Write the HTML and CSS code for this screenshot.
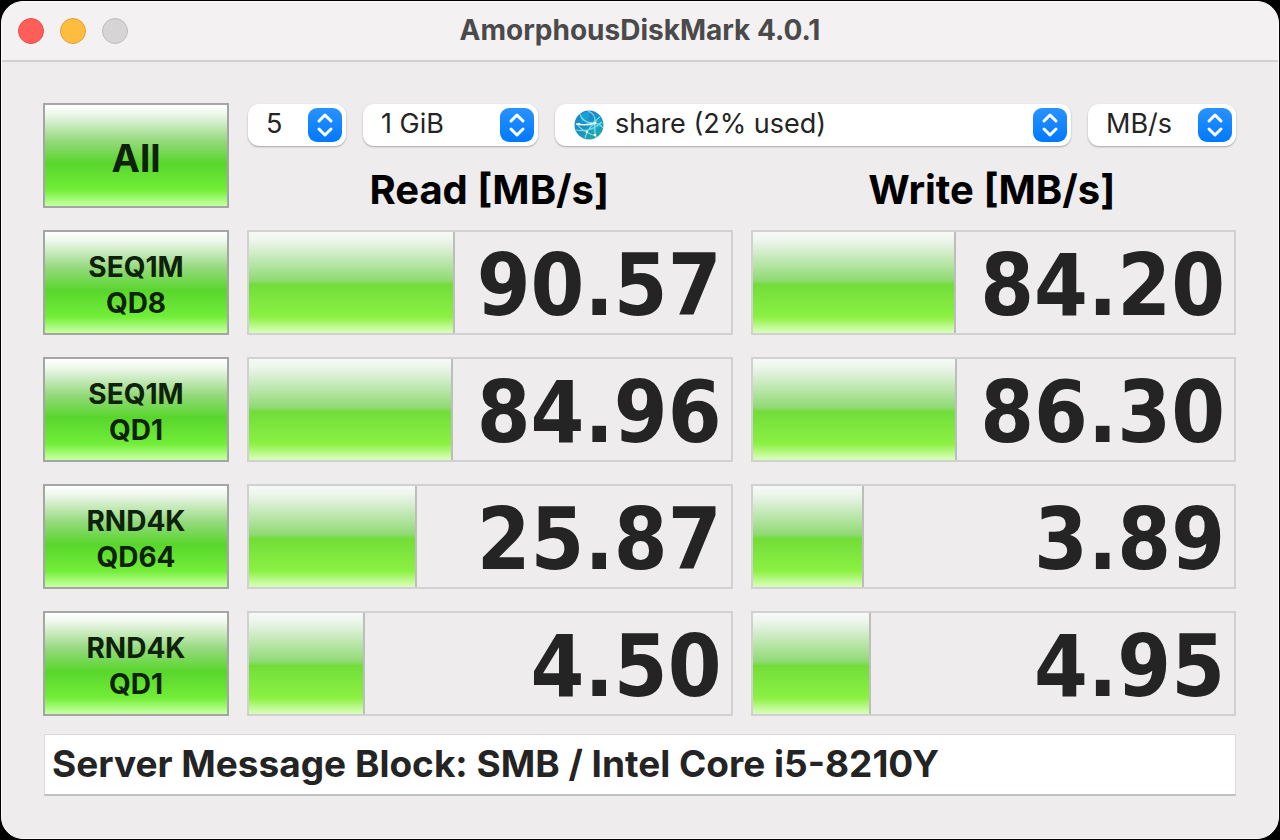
FILE: index.html
```html
<!DOCTYPE html>
<html lang="en">
<head>
<meta charset="utf-8">
<title>AmorphousDiskMark 4.0.1</title>
<link rel="stylesheet" href="styles.css">
</head>
<body>
<div class="window">
  <header class="titlebar">
    <div class="lights">
      <button class="light close" type="button" aria-label="Close"></button>
      <button class="light minimize" type="button" aria-label="Minimize"></button>
      <button class="light zoom" type="button" aria-label="Zoom" disabled></button>
    </div>
    <h1 class="title">AmorphousDiskMark 4.0.1</h1>
  </header>
  <main class="content">
    <div class="grid">
      <button class="run run-all" type="button">All</button>
      <div class="top">
        <div class="selects">
          <div class="popup count">
            <select aria-label="Test count"><option>5</option></select>
            <svg class="arrows" viewBox="0 0 34 34" aria-hidden="true"><path d="M11 13l6-6 6 6M11 21l6 6 6-6"/></svg>
          </div>
          <div class="popup size">
            <select aria-label="Test size"><option>1 GiB</option></select>
            <svg class="arrows" viewBox="0 0 34 34" aria-hidden="true"><path d="M11 13l6-6 6 6M11 21l6 6 6-6"/></svg>
          </div>
          <div class="popup volume">
            <svg class="globe" viewBox="0 0 30 30" aria-hidden="true">
              <defs>
                <linearGradient id="sea" x1="0" y1="0" x2="0.7" y2="1">
                  <stop offset="0" stop-color="#1c86d2"/>
                  <stop offset="0.5" stop-color="#1a8fc6"/>
                  <stop offset="1" stop-color="#22a8a2"/>
                </linearGradient>
              </defs>
              <circle cx="15" cy="15" r="14.5" fill="url(#sea)"/>
              <path d="M7 5q4-4 9-3l-2 7-7 3zM16 12l9-5 3 8-7 8-6-3z" fill="#12b4dc" opacity=".6"/>
              <path d="M6 4q2 9 14 9M14 1q8 3 7 12M21 13q-1 6 1 15M21 13q-8 6-10 15M3 14q5 8 19 12M2 20q14 3 26-8M21 13q5 1 8 5M21 13q2-5 5-6" fill="none" stroke="#a9ecf2" stroke-width="1.2" opacity=".75"/>
              <path d="M2 14q10 2 19-1" fill="none" stroke="#e8ffff" stroke-width="1.5"/>
              <g fill="#e8ffff"><circle cx="5" cy="14" r="1.3"/><circle cx="21" cy="13" r="1.5"/><circle cx="21" cy="25" r="1.3"/><circle cx="13" cy="22" r="1.2"/></g>
            </svg>
            <select aria-label="Volume"><option>share (2% used)</option></select>
            <svg class="arrows" viewBox="0 0 34 34" aria-hidden="true"><path d="M11 13l6-6 6 6M11 21l6 6 6-6"/></svg>
          </div>
          <div class="popup unit">
            <select aria-label="Unit"><option>MB/s</option></select>
            <svg class="arrows" viewBox="0 0 34 34" aria-hidden="true"><path d="M11 13l6-6 6 6M11 21l6 6 6-6"/></svg>
          </div>
        </div>
        <div class="heads">
          <h2 class="head">Read [MB/s]</h2>
          <h2 class="head">Write [MB/s]</h2>
        </div>
      </div>

      <button class="run" type="button">SEQ1M<br>QD8</button>
      <div class="meter"><div class="fill" style="width:42.7%"></div><output class="value">90.57</output></div>
      <div class="meter"><div class="fill" style="width:42.3%"></div><output class="value">84.20</output></div>

      <button class="run" type="button">SEQ1M<br>QD1</button>
      <div class="meter"><div class="fill" style="width:42.3%"></div><output class="value">84.96</output></div>
      <div class="meter"><div class="fill" style="width:42.5%"></div><output class="value">86.30</output></div>

      <button class="run" type="button">RND4K<br>QD64</button>
      <div class="meter"><div class="fill" style="width:34.9%"></div><output class="value">25.87</output></div>
      <div class="meter"><div class="fill" style="width:23.2%"></div><output class="value">3.89</output></div>

      <button class="run" type="button">RND4K<br>QD1</button>
      <div class="meter"><div class="fill" style="width:24.1%"></div><output class="value">4.50</output></div>
      <div class="meter"><div class="fill" style="width:24.7%"></div><output class="value">4.95</output></div>
    </div>
    <input class="note" type="text" aria-label="Description" value="Server Message Block: SMB / Intel Core i5-8210Y">
  </main>
</div>
</body>
</html>
```
FILE: styles.css
```css
* { box-sizing: border-box; }

body {
  margin: 0;
  padding: 1px;
  min-height: 100vh;
  display: flex;
  background: #000;
  font-family: Inter, "Liberation Sans", sans-serif;
  color: #242424;
}

.window {
  flex: 1;
  display: flex;
  flex-direction: column;
  overflow: hidden;
  border: 1px solid #fafafa;
  border-radius: 22px;
  background: #eeecec;
}

.titlebar {
  display: grid;
  grid-template-columns: 1fr auto 1fr;
  align-items: center;
  height: 60px;
  padding: 0 16px;
  border-bottom: 2px solid #d2d0d0;
  background: #f3f1f1;
}

.lights { display: flex; gap: 16px; }

.light {
  width: 26px;
  height: 26px;
  padding: 0;
  border: 1px solid;
  border-radius: 50%;
}
.close { background: #ff5f58; border-color: #e2504a; }
.minimize { background: #ffbd3f; border-color: #dfa23a; }
.zoom { background: #d6d4d5; border-color: #bebcbd; }

.title {
  margin: 0;
  padding-bottom: 2px;
  font-size: 28px;
  line-height: 32px;
  font-weight: 700;
  color: #4b4a4b;
}

.content {
  display: flex;
  flex-direction: column;
  gap: 18px;
  padding: 41px 42px 41px 41px;
}

.grid {
  display: grid;
  grid-template-columns: 186px 1fr 1fr;
  grid-auto-rows: 105px;
  gap: 22px 18px;
}

.top { grid-column: span 2; }

.selects {
  display: flex;
  gap: 17px;
  padding: 1px 0 0 1px;
}

.popup { position: relative; height: 42px; }
.count { width: 98px; }
.size { width: 175px; }
.volume { flex: 1; }
.unit { width: 148px; }

.popup select {
  appearance: none;
  width: 100%;
  height: 100%;
  padding: 0 40px 2px 18px;
  border: 0;
  border-radius: 11px;
  background: #fff;
  box-shadow: 0 1px 2px rgba(0, 0, 0, .3);
  font: 400 27px/32px Inter, "Liberation Sans", sans-serif;
  color: #242424;
}
.volume select { padding-left: 60px; }

.arrows {
  position: absolute;
  top: 4px;
  right: 4px;
  width: 34px;
  height: 34px;
  border-radius: 9px;
  background: linear-gradient(#2a92ff, #0079ff);
  fill: none;
  stroke: #fff;
  stroke-width: 3;
  stroke-linecap: round;
  stroke-linejoin: round;
  pointer-events: none;
}

.globe {
  position: absolute;
  top: 6px;
  left: 19px;
  width: 30px;
  height: 30px;
}

.heads {
  display: grid;
  grid-template-columns: 1fr 1fr;
  gap: 18px;
  padding: 19px 2px 0 0;
}

.head {
  margin: 0;
  font-size: 40px;
  line-height: 50px;
  font-weight: 700;
  text-align: center;
  color: #000;
}

.run {
  padding: 4px 0 0;
  border: 2px solid #a5a5a5;
  background: linear-gradient(#fff 0%, #f0f8ef 8%, #93d97b 36%, #58d62c 58%, #72ee38 84%, #b9ff91 97%, #c6ffa4 100%);
  font: 700 28px/36px Inter, "Liberation Sans", sans-serif;
  color: #0e2109;
}
.run-all { font-size: 38px; }

.meter {
  display: grid;
  border: 2px solid #d2d1d1;
}

.fill {
  grid-area: 1 / 1;
  border-right: 2px solid #bdbdbd;
  background: linear-gradient(#f7f9f7 0%, #eef5ee 8%, #90da73 48%, #72dd3a 52%, #8bf142 84%, #cefca9 97%, #d8fdbb 100%);
}

.value {
  grid-area: 1 / 1;
  padding: 5px 9px 0 0;
  font-family: "DejaVu Sans Condensed", "DejaVu Sans", sans-serif;
  font-size: 86px;
  line-height: 96px;
  font-weight: 700;
  text-align: right;
}

.note {
  height: 62px;
  margin-left: 1px;
  padding: 0 7px 2px;
  border: 1px solid #dcdada;
  border-bottom: 2px solid #bfc1c1;
  background: #fff;
  font: 700 37px/44px Inter, "Liberation Sans", sans-serif;
  color: #242424;
}
```
